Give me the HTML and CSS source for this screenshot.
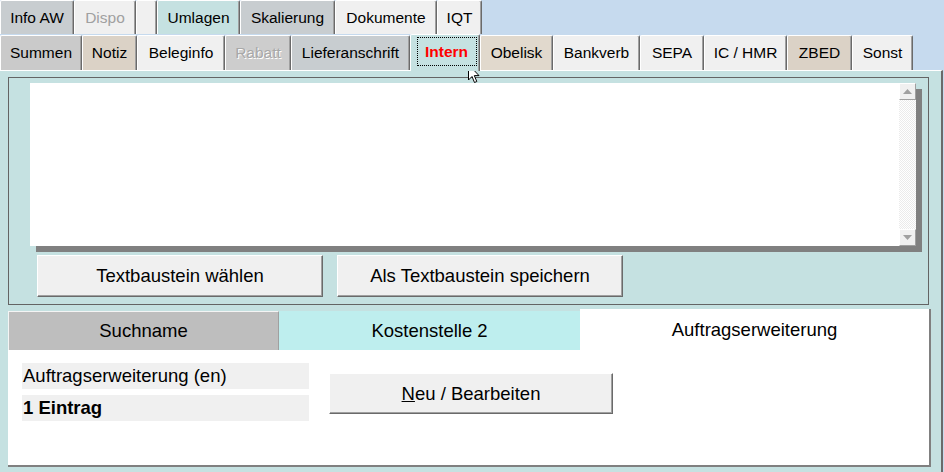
FILE: index.html
```html
<!DOCTYPE html>
<html>
<head>
<meta charset="utf-8">
<link rel="stylesheet" href="styles.css">
</head>
<body>
<div class="app">
  <div class="tabrow row1">
    <div class="tab grey" style="width:74px">Info AW</div>
    <div class="tab light disabled" style="width:62px">Dispo</div>
    <div class="tab light" style="width:21px"></div>
    <div class="tab teal" style="width:83px">Umlagen</div>
    <div class="tab grey" style="width:95px">Skalierung</div>
    <div class="tab light" style="width:102px">Dokumente</div>
    <div class="tab light" style="width:45px">IQT</div>
  </div>
  <div class="tabrow row2">
    <div class="tab grey2" style="width:82px">Summen</div>
    <div class="tab beige" style="width:55px">Notiz</div>
    <div class="tab light" style="width:88px">Beleginfo</div>
    <div class="tab grey3 emboss" style="width:66px">Rabatt</div>
    <div class="tab grey" style="width:119px">Lieferanschrift</div>
    <div class="tab selected" style="width:70px"><span class="focus">Intern</span></div>
    <div class="tab beige2" style="width:73px">Obelisk</div>
    <div class="tab light" style="width:87px">Bankverb</div>
    <div class="tab light" style="width:64px">SEPA</div>
    <div class="tab light" style="width:83px">IC / HMR</div>
    <div class="tab beige" style="width:65px">ZBED</div>
    <div class="tab light" style="width:61px">Sonst</div>
  </div>
  <div class="panel">
    <div class="group">
      <div class="memo">
        <div class="scroll">
          <div class="sbtn"><svg width="9" height="5" viewBox="0 0 9 5"><polygon points="0,5 9,5 4.5,0" fill="#a0a0a0"/></svg></div>
          <div class="sbtn"><svg width="9" height="5" viewBox="0 0 9 5"><polygon points="0,0 9,0 4.5,5" fill="#a0a0a0"/></svg></div>
        </div>
      </div>
      <div class="btnrow">
        <div class="btn">Textbaustein wählen</div>
        <div class="btn">Als Textbaustein speichern</div>
      </div>
    </div>
    <div class="lower">
      <div class="ltabs">
        <div class="ltab lgrey">Suchname</div>
        <div class="ltab lcyan">Kostenstelle 2</div>
        <div class="ltab lsel">Auftragserweiterung</div>
      </div>
      <div class="lbody">
        <div class="lcol">
          <div class="field">Auftragserweiterung (en)</div>
          <div class="field bold">1 Eintrag</div>
        </div>
        <div class="btn nbtn"><span><u>N</u>eu / Bearbeiten</span></div>
      </div>
    </div>
  </div>
  <svg class="cursor" width="13" height="20" viewBox="0 0 13 20">
    <path d="M0.5 0.5 L0.5 16 L4 12.5 L6.5 18.5 L8.8 17.5 L6.3 11.6 L11 11.6 Z" fill="#fff" stroke="#000" stroke-width="1" stroke-linejoin="miter"/>
  </svg>
</div>
</body>
</html>
```

FILE: styles.css
```css
* { box-sizing: border-box; }
body {
  margin: 0;
  background: #C6DAEE;
  font-family: "Liberation Sans", Arial, sans-serif;
  color: #000;
}
.app {
  width: 944px;
  height: 472px;
  overflow: hidden;
  position: relative;
}
.tabrow {
  display: flex;
  align-items: flex-start;
  height: 35px;
}
.tab {
  height: 34px;
  border-top: 1px solid #fff;
  border-left: 1px solid #fff;
  border-right: 1px solid #6a6a6a;
  box-shadow: inset -1px 0 #a0a0a0;
  border-radius: 2px 2px 0 0;
  display: flex;
  align-items: center;
  justify-content: center;
  font-size: 15.5px;
  white-space: nowrap;
}
.row2 .tab { height: 35px; }
.grey { background: #C8CDD0; }
.grey2 { background: #CACACA; }
.grey3 { background: #CDCDCD; }
.light { background: #F0F0F0; }
.teal { background: #C5E1E1; }
.beige { background: #DBD2C6; }
.beige2 { background: #E1D9CD; }
.disabled { color: #A0A0A0; }
.emboss { color: #A8A8A8; text-shadow: 1px 1px 0 #fff; }
.row2 .tab.selected {
  position: relative;
  z-index: 1;
  margin-top: -1px;
  height: 37px;
  background: #C5E1E1;
  align-items: flex-start;
  padding-top: 2px;
}
.focus {
  width: 60px;
  height: 29px;
  margin-left: 3px;
  border: 1px dotted #000;
  display: flex;
  align-items: center;
  justify-content: center;
  color: #FF0000;
  font-weight: bold;
  font-size: 15.5px;
}
.panel {
  width: 943px;
  height: 402px;
  background: #C5E1E1;
  border-top: 1px solid #fff;
  border-right: 2px solid #6a6a6a;
  padding: 6px 0 0 8px;
}
.group {
  width: 921px;
  height: 228px;
  border: 1px solid #646464;
  padding: 5px 0 0 21px;
}
.memo {
  width: 886px;
  height: 163px;
  background: #fff;
  box-shadow: 6px 6px 0 #808080;
  display: flex;
  justify-content: flex-end;
}
.scroll {
  width: 17px;
  height: 100%;
  display: flex;
  flex-direction: column;
  justify-content: space-between;
  background: repeating-conic-gradient(#fff 0 25%, #ebebeb 0 50%) 0 0 / 2px 2px;
}
.sbtn {
  height: 17px;
  background: #F0F0F0;
  border: 1px solid;
  border-color: #fff #a0a0a0 #a0a0a0 #fff;
  display: flex;
  align-items: center;
  justify-content: center;
}
.btnrow {
  display: flex;
  gap: 14px;
  margin: 9px 0 0 7px;
}
.btn {
  width: 286px;
  height: 42px;
  background: #F0F0F0;
  border: 1px solid;
  border-color: #fff #6a6a6a #6a6a6a #fff;
  box-shadow: inset -1px -1px #a0a0a0;
  display: flex;
  align-items: center;
  justify-content: center;
  font-size: 18.5px;
  white-space: nowrap;
}
.lower {
  margin-top: 4px;
  width: 923px;
  height: 158px;
  display: flex;
  flex-direction: column;
}
.ltabs {
  display: flex;
  align-items: flex-end;
  height: 41px;
}
.ltab {
  height: 39px;
  display: flex;
  align-items: center;
  justify-content: center;
  font-size: 18.5px;
  white-space: nowrap;
}
.lgrey {
  width: 271px;
  background: #BEBEBE;
  border-top: 1px solid #f4f4f4;
  border-left: 1px solid #f4f4f4;
  border-right: 1px solid #a0a0a0;
}
.lcyan {
  width: 301px;
  background: #BEEEEE;
}
.lsel {
  width: 351px;
  height: 41px;
  background: #fff;
  border-right: 2px solid #808080;
  padding-top: 1px;
}
.lbody {
  flex: 1;
  background: #fff;
  border-right: 2px solid #808080;
  border-bottom: 2px solid #808080;
  padding: 13px 0 0 14px;
  display: flex;
  align-items: flex-start;
}
.lcol {
  display: flex;
  flex-direction: column;
  gap: 6px;
}
.field {
  width: 287px;
  height: 26px;
  background: #F0F0F0;
  padding-left: 1px;
  display: flex;
  align-items: center;
  font-size: 18.5px;
  white-space: nowrap;
}
.bold { font-weight: bold; }
.nbtn {
  width: 284px;
  height: 41px;
  margin: 10px 0 0 20px;
}
.cursor {
  position: absolute;
  left: 468px;
  top: 64px;
}
```
